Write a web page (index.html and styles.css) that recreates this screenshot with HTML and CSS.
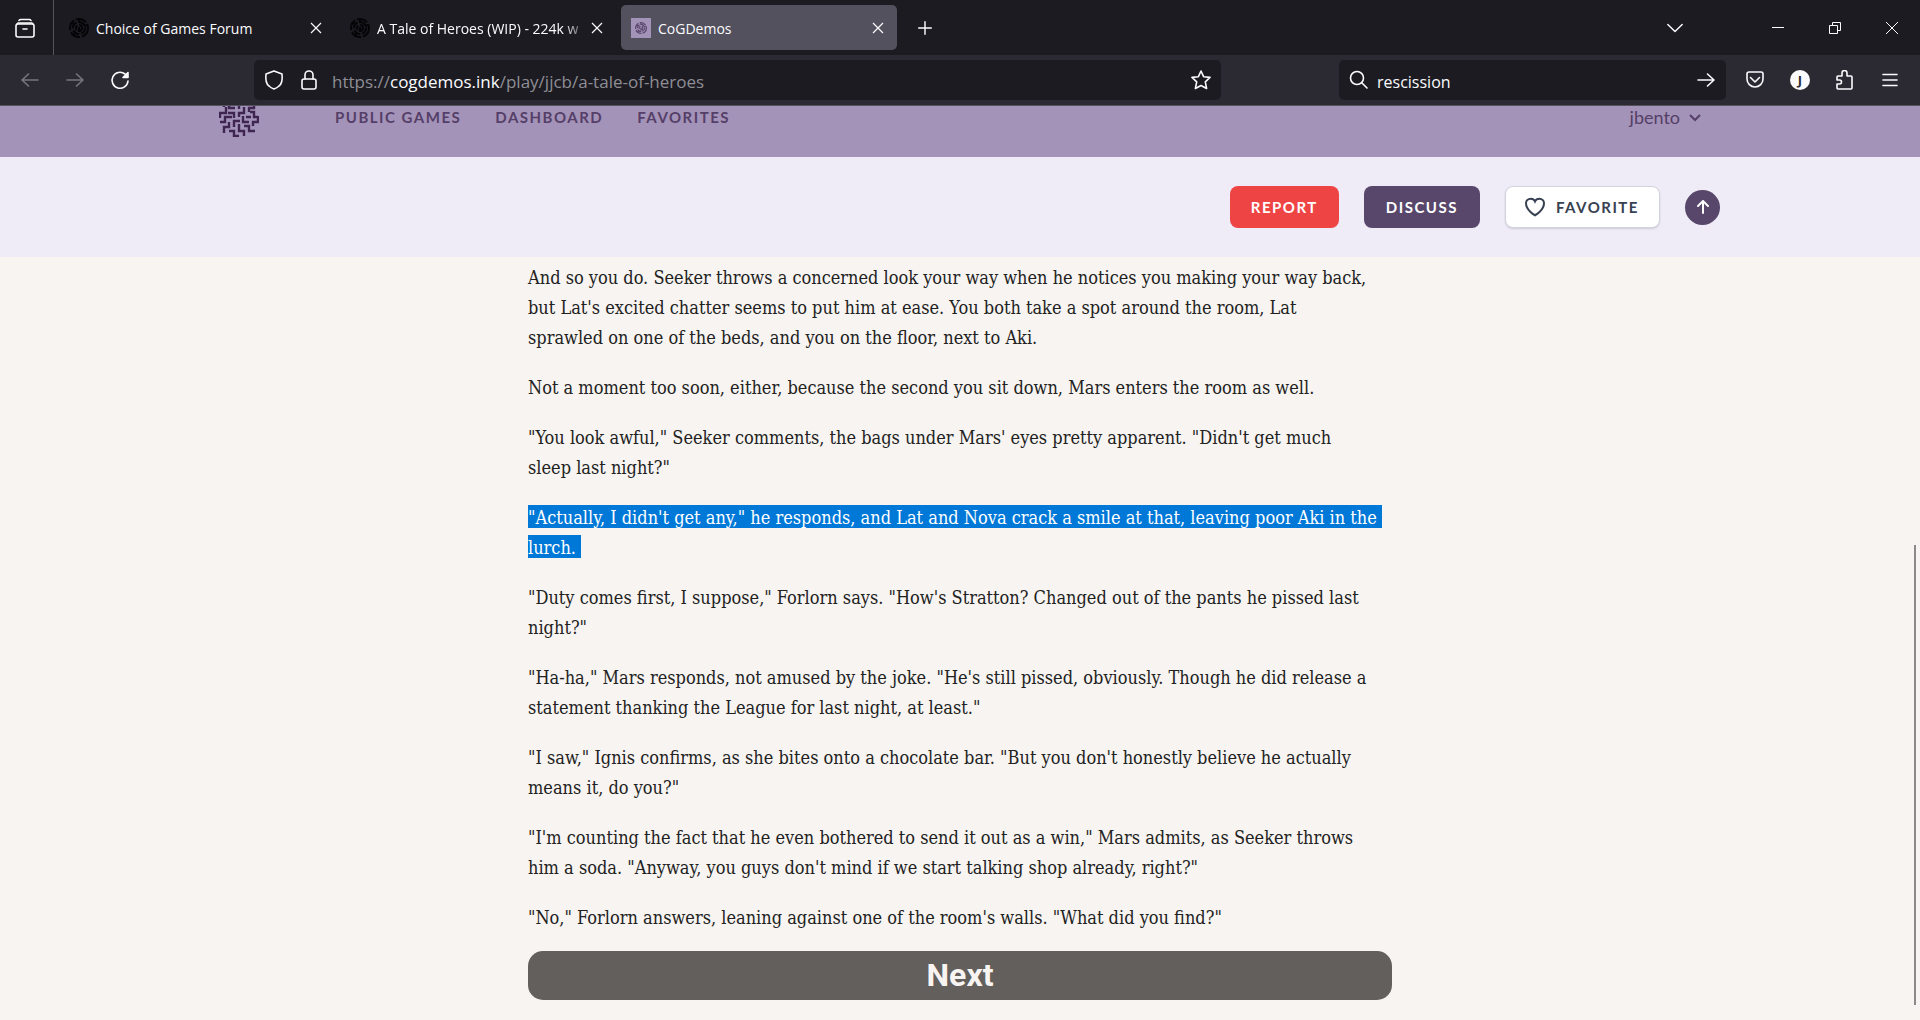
FILE: index.html
```html
<!DOCTYPE html>
<html lang="en">
<head>
<meta charset="utf-8">
<title>CoGDemos</title>
<link rel="stylesheet" href="styles.css">
</head>
<body>
<svg class="defs" width="0" height="0" aria-hidden="true">
  <symbol id="x" viewBox="0 0 16 16"><path d="M3 3l10 10M13 3L3 13"/></symbol>
  <symbol id="maze" viewBox="0 0 20 20"><circle cx="10" cy="10" r="9" stroke-dasharray="11 2"/><circle cx="10" cy="10" r="6" stroke-dasharray="7 2"/><circle cx="10" cy="10" r="3" stroke-dasharray="5 2"/><path d="M10 1v4M18 7l-3 1M5 17l2-3M3 5l3 2M10 9v5"/></symbol>
  <symbol id="logo" viewBox="0 0 40 40"><path d="M1 21v-5h6v-6M10 7v4h6M20 7v5M9 16h6v5M1 25h5v-5h7M5 36v-6h5v-5M20 20v-4h5v-6M15 30v-6h6M24 19v6h6M30 15v-4h5V7M31 15h4v5h4M39 19v6h-5v4M25 29h5v5h6M20 27v7h5v5M10 34h5v5h5M27 20h5M5 10V6h6M14 6V2h6M24 6V2h6v5"/></symbol>
</svg>
<header class="chrome">
  <div class="tabs">
    <button class="view" aria-label="Firefox view"><svg class="icon" viewBox="0 0 20 20"><rect x="1" y="6" width="18" height="13" rx="2"/><path d="M4 2.500Q4.500 1.500 6 1.500h8q1.500 0 2 1M2 6l1-1h14l1 1M8 11h4"/></svg></button>
    <div class="tab"><svg class="fav dark"><use href="#maze"/></svg><span>Choice of Games Forum</span><button aria-label="Close tab"><svg><use href="#x"/></svg></button></div>
    <div class="tab"><svg class="fav dark"><use href="#maze"/></svg><span class="fade">A Tale of Heroes (WIP) - 224k w</span><button aria-label="Close tab"><svg><use href="#x"/></svg></button></div>
    <div class="tab active"><svg class="fav purple"><use href="#maze" x="4" y="3" width="12" height="14"/></svg><span>CoGDemos</span><button aria-label="Close tab"><svg><use href="#x"/></svg></button></div>
    <button class="plus" aria-label="New tab"><svg class="icon" viewBox="0 0 20 20"><path d="M10 3v14M3 10h14"/></svg></button>
    <button class="list" aria-label="List tabs"><svg class="icon" viewBox="0 0 20 20"><path d="M2 6l8 8 8-8"/></svg></button>
    <div class="window">
      <button aria-label="Minimize"><svg class="thin" viewBox="0 0 12 12"><path d="M0 5.500h12"/></svg></button>
      <button aria-label="Restore"><svg class="thin" viewBox="0 0 12 12"><path d="M.5 3.500h8v8h-8zM3.500 3.500v-3h8v8h-3"/></svg></button>
      <button aria-label="Close"><svg class="thin" viewBox="0 0 12 12"><path d="M0 0l12 12M12 0L0 12"/></svg></button>
    </div>
  </div>
  <div class="toolbar">
    <div class="history">
      <button class="dim" aria-label="Back"><svg class="icon" viewBox="0 0 20 20"><path d="M2 10h16M8.500 4l-6.500 6 6.500 6"/></svg></button>
      <button class="dim" aria-label="Forward"><svg class="icon" viewBox="0 0 20 20"><path d="M2 10h16M11.500 4l6.500 6-6.500 6"/></svg></button>
      <button aria-label="Reload"><svg class="icon" viewBox="0 0 20 20"><path d="M18 11a8 8 0 1 1-3-7l2 2"/><path class="solid" d="M18 2.500v5h-5z"/></svg></button>
    </div>
    <div class="url">
      <svg class="icon" viewBox="0 0 20 20"><path d="M10 1l8 3q1 9-3 12-2 2-5 3-3-1-5-3-4-3-3-12z"/></svg>
      <svg class="icon" viewBox="0 0 20 20"><rect x="3" y="9" width="14" height="10" rx="2"/><path d="M6 9V5a4 4 0 0 1 8 0v4"/></svg>
      <a href="#">https://<b>cogdemos.ink</b>/play/jjcb/a-tale-of-heroes</a>
      <button aria-label="Bookmark"><svg class="icon" viewBox="0 0 20 20"><path d="M10 1l2.600 5.700 6.400.7-4.700 4.400L15.600 18.500 10 15.500 4.400 18.500l1.300-6.700L1 7.400l6.400-.7z"/></svg></button>
    </div>
    <div class="search">
      <svg class="icon" viewBox="0 0 20 20"><circle cx="8" cy="8" r="6.500"/><path d="M13 13l5 5"/></svg>
      <input type="text" aria-label="Search" value="rescission">
      <button aria-label="Go"><svg class="icon" viewBox="0 0 20 20"><path d="M2 10h16M11.500 4l6.500 6-6.500 6"/></svg></button>
    </div>
    <div class="tools">
      <button aria-label="Pocket"><svg class="icon" viewBox="0 0 20 20"><path d="M2 4q0-2 2-2h12q2 0 2 2v5a8 8 0 0 1-16 0zM5.500 7.500L10 12l4.500-4.500"/></svg></button>
      <button class="avatar" aria-label="Account">J</button>
      <button aria-label="Extensions"><svg class="icon" viewBox="0 0 20 20"><path d="M3 19q-1 0-1-1v-4h2.500a2 2 0 0 0 0-4H2V7q0-1 1-1h4V3a2.500 2.500 0 0 1 5 0v3h4q1 0 1 1v11q0 1-1 1z"/></svg></button>
      <button aria-label="Menu"><svg class="icon" viewBox="0 0 20 20"><path d="M3 4.500h14M3 10h14M3 15.500h14"/></svg></button>
    </div>
  </div>
</header>
<nav class="site">
  <div class="inner">
    <a class="logo" href="#" aria-label="Home"><svg viewBox="0 0 40 40"><use href="#logo"/></svg></a>
    <a href="#">PUBLIC GAMES</a><a href="#">DASHBOARD</a><a href="#">FAVORITES</a>
    <button class="user">jbento <svg viewBox="0 0 12 12"><path d="M1 4l5 5 5-5"/></svg></button>
  </div>
</nav>
<section class="actions">
  <div class="inner">
    <button class="btn red">REPORT</button>
    <button class="btn plum">DISCUSS</button>
    <button class="btn white"><svg viewBox="0 0 24 24"><path d="M21 8.250c0-2.500-2.100-4.500-4.700-4.500-1.900 0-3.600 1.100-4.300 2.700-.7-1.600-2.400-2.700-4.300-2.700C5.100 3.750 3 5.750 3 8.250c0 7.200 9 12 9 12s9-4.800 9-12z"/></svg>FAVORITE</button>
    <button class="top" aria-label="Back to top"><svg viewBox="0 0 14 14"><path d="M7 13V1M2 6l5-5 5 5"/></svg></button>
  </div>
</section>
<main class="story">
  <p>And so you do. Seeker throws a concerned look your way when he notices you making your way back,<br>but Lat's excited chatter seems to put him at ease. You both take a spot around the room, Lat<br>sprawled on one of the beds, and you on the floor, next to Aki.</p>
  <p>Not a moment too soon, either, because the second you sit down, Mars enters the room as well.</p>
  <p>"You look awful," Seeker comments, the bags under Mars' eyes pretty apparent. "Didn't get much<br>sleep last night?"</p>
  <p><mark>"Actually, I didn't get any," he responds, and Lat and Nova crack a smile at that, leaving poor Aki in the <br>lurch. </mark></p>
  <p>"Duty comes first, I suppose," Forlorn says. "How's Stratton? Changed out of the pants he pissed last<br>night?"</p>
  <p>"Ha-ha," Mars responds, not amused by the joke. "He's still pissed, obviously. Though he did release a<br>statement thanking the League for last night, at least."</p>
  <p>"I saw," Ignis confirms, as she bites onto a chocolate bar. "But you don't honestly believe he actually<br>means it, do you?"</p>
  <p>"I'm counting the fact that he even bothered to send it out as a win," Mars admits, as Seeker throws<br>him a soda. "Anyway, you guys don't mind if we start talking shop already, right?"</p>
  <p>"No," Forlorn answers, leaning against one of the room's walls. "What did you find?"</p>
  <button class="next">Next</button>
</main>
<div class="scroll"></div>
</body>
</html>
```
FILE: styles.css
```css
* { box-sizing: border-box; }
body { margin: 0; background: #f7f4f1; color: #222; font-family: "Open Sans", sans-serif; overflow: hidden; }
button { border: 0; padding: 0; background: none; color: inherit; font: inherit; display: flex; align-items: center; justify-content: center; }
a { color: inherit; text-decoration: none; }
svg { fill: none; stroke: currentColor; flex: none; display: block; }
.defs { position: absolute; }
.icon { width: 20px; height: 20px; stroke-width: 1.6; stroke-linecap: round; stroke-linejoin: round; }
.thin { width: 12px; height: 12px; stroke-width: 1; }
.solid { fill: currentColor; }

.chrome { color: #fbfbfe; background: #2b2a33; border-bottom: 1px solid #55525c; }
.tabs { display: flex; align-items: center; height: 55px; background: #1c1b22; font-size: 14px; }
.view { width: 54px; height: 55px; padding-right: 4px; border-right: 1px solid #55545e; }
.tab { display: flex; align-items: center; width: 276px; height: 45px; margin-left: 5px; padding: 0 11px 0 10px; border-radius: 5px; white-space: nowrap; }
.tab span { flex: 1; min-width: 0; margin-left: 7px; padding-top: 1px; overflow: hidden; }
.tab button svg { width: 16px; height: 16px; stroke-width: 1.2; }
.tab .fade { mask-image: linear-gradient(to right, #000 88%, transparent); }
.active { background: #53515e; }
.fav { width: 20px; height: 20px; }
.dark { color: #050508; stroke-width: 2; }
.purple { background: #a493b8; color: #5b476c; stroke-width: 2; }
.plus { margin-left: 19px; }
.list { margin-left: auto; }
.list .icon, .plus .icon { width: 18px; height: 18px; }
.window { display: flex; gap: 45px; margin: 0 22px 0 88px; }

.toolbar { display: flex; align-items: center; height: 50px; }
.history { display: flex; gap: 25px; width: 254px; padding-left: 20px; }
.dim { color: #77767e; }
.url, .search { display: flex; align-items: center; height: 40px; border-radius: 5px; background: #1c1b22; font-size: 16px; }
.url { flex: 1; padding: 0 10px; gap: 15px; }
.url a { flex: 1; padding-top: 3px; margin-left: -2px; color: #8f8e95; font-size: 17px; }
.url b { color: #fbfbfe; font-weight: 400; }
.search { width: 387px; margin-left: 118px; padding: 0 10px; gap: 8px; }
.search input { flex: 1; min-width: 0; border: 0; padding: 3px 0 0; background: none; color: inherit; font: inherit; }
.tools { display: flex; gap: 25px; padding: 0 20px 0 19px; }
.avatar { width: 20px; height: 20px; border-radius: 50%; background: #fbfbfe; color: #2b2a33; font-size: 13px; font-weight: 700; }

.inner { display: flex; align-items: center; max-width: 1522px; margin: 0 auto; padding: 0 20px; }
.site { height: 51px; background: #a493b8; color: #553f68; font-family: Lato, sans-serif; overflow: hidden; }
.site .inner { height: 22px; gap: 34px; font-size: 15px; font-weight: 700; letter-spacing: 1.5px; }
.logo { width: 82px; height: 40px; }
.logo svg { width: 40px; height: 40px; stroke: #3f2650; stroke-width: 2.4; }
.user { margin-left: auto; gap: 9px; font-size: 18px; font-weight: 400; letter-spacing: 0; }
.user svg { width: 12px; height: 12px; stroke-width: 2; }
.actions { background: #efecf8; font-family: Lato, sans-serif; }
.actions .inner { justify-content: flex-end; gap: 25px; height: 100px; padding-right: 1px; }
.btn { height: 42px; padding: 0 21px; border-radius: 8px; color: #fff; font-size: 15px; font-weight: 700; letter-spacing: 1.5px; }
.red { background: #ef4444; }
.plum { padding: 0 22px; background: #58476b; }
.white { gap: 9px; padding: 0 20px 0 17px; background: #fff; color: #374151; border: 1px solid #d1d5db; box-shadow: 0 1px 2px #0002; }
.white svg { width: 24px; height: 24px; stroke-width: 2; }
.top { width: 35px; height: 35px; border-radius: 50%; background: #58476b; color: #fff; }
.top svg { width: 14px; height: 14px; stroke-width: 2; stroke-linecap: round; }

.story { width: 45%; min-width: 864px; margin: 0 auto; padding: 6px 0 20px; font: 18px/30px "DejaVu Serif Condensed", "DejaVu Serif", serif; white-space: nowrap; }
.story p { margin: 0 0 20px; }
mark { padding-top: 2px; background: #0078d7; color: #fff; white-space: pre; }
.next { width: 100%; height: 49px; margin-top: -2px; border-radius: 15px; background: #625f5d; color: #f7f4f1; font: 700 32px/49px Roboto, sans-serif; }
.scroll { position: fixed; right: 4px; top: 545px; bottom: 15px; width: 2px; background: #8b8989; }
```
